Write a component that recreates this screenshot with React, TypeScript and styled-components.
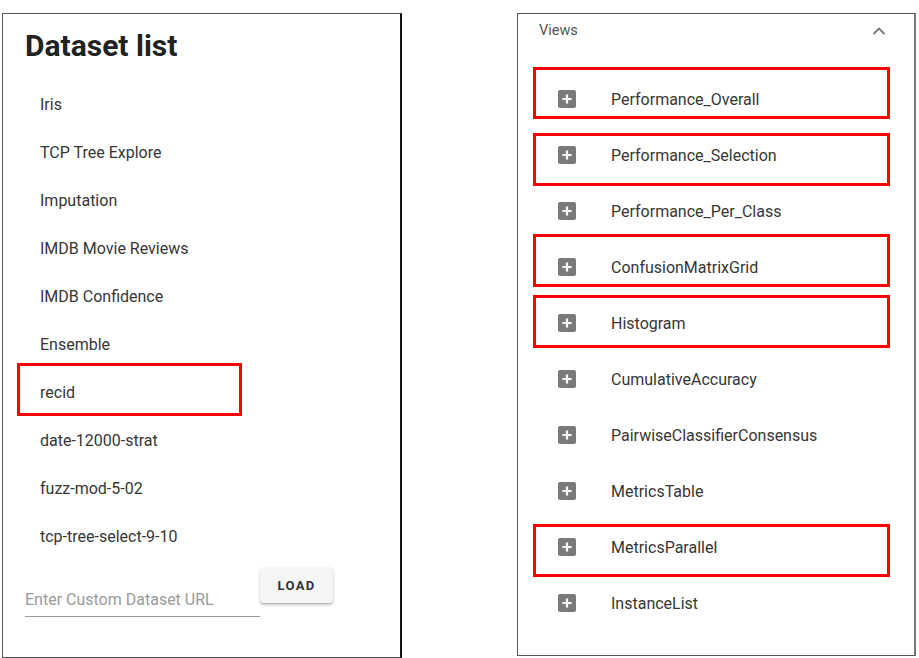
import React from "react";
import styled, { createGlobalStyle, css } from "styled-components";

const Global = createGlobalStyle`
  html, body { margin: 0; padding: 0; background: #fff; }
  body { font-family: Roboto, "Liberation Sans", Arial, sans-serif; }
  *, *::before, *::after { box-sizing: border-box; }
`;

const Page = styled.div`
  display: flex;
  align-items: flex-start;
  padding: 13px 0 0 2px;
  gap: 115px;
  width: 919px;
  height: 658px;
`;

const LeftPanel = styled.section`
  width: 400px;
  height: 645px;
  border: 1px solid #555;
  border-right: 2px solid #111;
  padding: 15px 0 0 0;
  display: flex;
  flex-direction: column;
`;

const Title = styled.h1`
  margin: 0 0 0 22px;
  font-size: 30px;
  font-weight: 700;
  color: #222;
  line-height: 34px;
`;

const DatasetList = styled.ul`
  list-style: none;
  margin: 17px 0 0 0;
  padding: 0;
`;

type BoxProps = { $box?: [number, number, number, number] };

const highlight = css<BoxProps>`
  ${(p) =>
    p.$box &&
    css`
      &::after {
        content: "";
        position: absolute;
        left: ${p.$box[0]}px;
        top: ${p.$box[1]}px;
        width: ${p.$box[2]}px;
        height: ${p.$box[3]}px;
        border: 3px solid #ff0000;
        pointer-events: none;
      }
    `}
`;

const DatasetItem = styled.li<BoxProps>`
  position: relative;
  height: 48px;
  display: flex;
  align-items: center;
  padding-left: 37px;
  font-size: 16px;
  color: #363636;
  ${highlight}
`;

const LoadRow = styled.div`
  display: flex;
  align-items: flex-start;
  margin: 7px 0 0 22px;
`;

const UrlInput = styled.input`
  width: 235px;
  margin-top: 23px;
  border: none;
  border-bottom: 1px solid #999;
  padding: 0 0 7px 0;
  font-family: inherit;
  font-size: 16px;
  color: #333;
  outline: none;
  background: transparent;
  &::placeholder { color: #9a9a9a; }
`;

const LoadButton = styled.button`
  width: 73px;
  height: 36px;
  border: none;
  border-radius: 4px;
  background: #f5f5f5;
  box-shadow: 0 2px 3px rgba(0,0,0,0.22), 0 1px 1px rgba(0,0,0,0.12);
  font-family: inherit;
  font-size: 13px;
  font-weight: 700;
  letter-spacing: 1.3px;
  color: #333;
`;

const RightPanel = styled.section`
  width: 399px;
  height: 643px;
  border: 1px solid #555;
  border-right: 2px solid #777;
  display: flex;
  flex-direction: column;
`;

const Header = styled.div`
  height: 33px;
  display: flex;
  align-items: center;
  justify-content: space-between;
  padding: 0 28px 0 21px;
  font-size: 14.5px;
  color: #555;
`;

const ViewList = styled.ul`
  list-style: none;
  margin: 24px 0 0 0;
  padding: 0;
`;

const ViewItem = styled.li<BoxProps>`
  position: relative;
  height: 56px;
  display: flex;
  align-items: center;
  padding-left: 40px;
  font-size: 16px;
  color: #363636;
  ${highlight}
`;

const PlusBox = styled.span`
  width: 18px;
  height: 18px;
  border-radius: 2px;
  background: #7a7a7a;
  display: inline-flex;
  align-items: center;
  justify-content: center;
  margin-right: 35px;
`;

const Plus = () => (
  <PlusBox>
    <svg width="12" height="12" viewBox="0 0 12 12">
      <path d="M6 1.5v9M1.5 6h9" stroke="#fff" strokeWidth="2.2" />
    </svg>
  </PlusBox>
);

const Chevron = () => (
  <svg width="14" height="10" viewBox="0 0 14 10">
    <path d="M1.5 8L7 2.5 12.5 8" fill="none" stroke="#777" strokeWidth="1.8" />
  </svg>
);

const datasets: { name: string; box?: [number, number, number, number] }[] = [
  { name: "Iris" },
  { name: "TCP Tree Explore" },
  { name: "Imputation" },
  { name: "IMDB Movie Reviews" },
  { name: "IMDB Confidence" },
  { name: "Ensemble" },
  { name: "recid", box: [14, -5, 225, 53] },
  { name: "date-12000-strat" },
  { name: "fuzz-mod-5-02" },
  { name: "tcp-tree-select-9-10" },
];

const views: { name: string; box?: [number, number, number, number] }[] = [
  { name: "Performance_Overall", box: [15, -4, 357, 52] },
  { name: "Performance_Selection", box: [15, 6, 357, 53] },
  { name: "Performance_Per_Class" },
  { name: "ConfusionMatrixGrid", box: [15, -5, 357, 53] },
  { name: "Histogram", box: [15, 0, 357, 53] },
  { name: "CumulativeAccuracy" },
  { name: "PairwiseClassifierConsensus" },
  { name: "MetricsTable" },
  { name: "MetricsParallel", box: [15, 5, 357, 53] },
  { name: "InstanceList" },
];

export default function App() {
  return (
    <>
      <Global />
      <Page>
        <LeftPanel>
          <Title>Dataset list</Title>
          <DatasetList>
            {datasets.map((d) => (
              <DatasetItem key={d.name} $box={d.box}>
                {d.name}
              </DatasetItem>
            ))}
          </DatasetList>
          <LoadRow>
            <UrlInput placeholder="Enter Custom Dataset URL" />
            <LoadButton>LOAD</LoadButton>
          </LoadRow>
        </LeftPanel>
        <RightPanel>
          <Header>
            <span>Views</span>
            <Chevron />
          </Header>
          <ViewList>
            {views.map((v) => (
              <ViewItem key={v.name} $box={v.box}>
                <Plus />
                {v.name}
              </ViewItem>
            ))}
          </ViewList>
        </RightPanel>
      </Page>
    </>
  );
}
